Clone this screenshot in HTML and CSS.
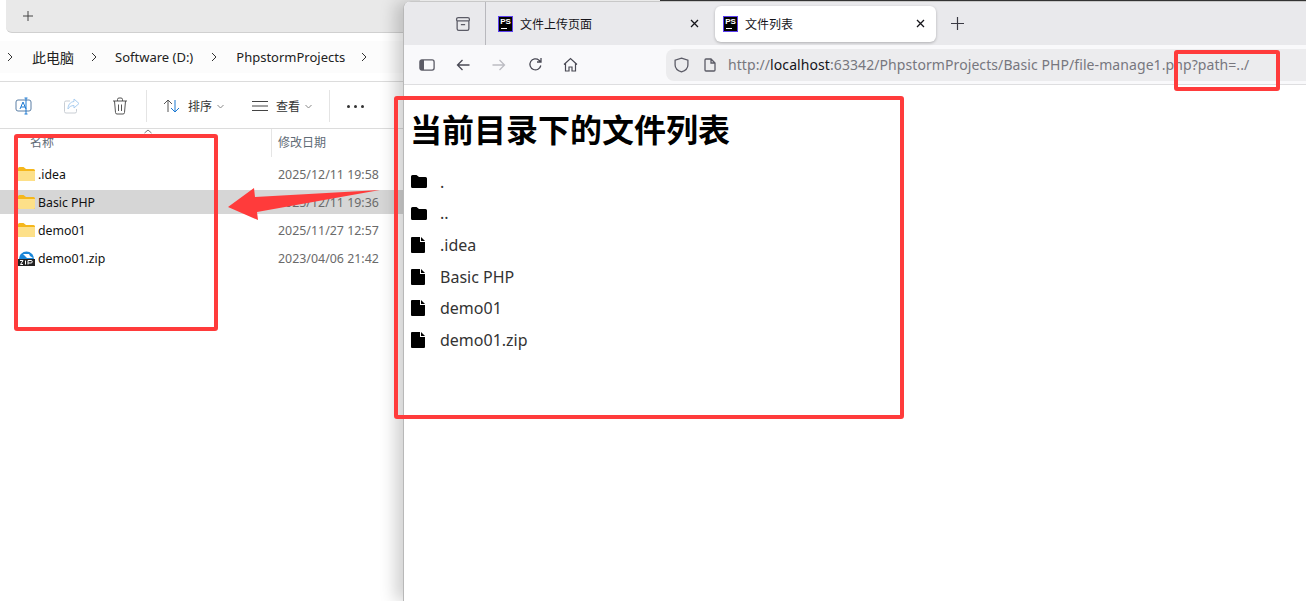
FILE: index.html
```html
<!DOCTYPE html>
<html lang="zh-CN">
<head>
<meta charset="utf-8">
<title>文件列表</title>
<link rel="stylesheet" href="styles.css">
</head>
<body>
<div class="desktop">
  <section class="explorer">
    <div class="ex-tabs">
      <div class="ex-tab-left"></div>
      <svg class="ex-plus" width="12" height="12" viewBox="0 0 12 12"><path d="M6 1v10M1 6h10" stroke="#444" stroke-width="1" fill="none"/></svg>
    </div>
    <div class="ex-address">
      <svg class="crumb-sep first" width="6" height="10" viewBox="0 0 6 10"><path d="M1 1l4 4-4 4" stroke="#333" fill="none"/></svg>
      <span class="crumb zh">此电脑</span>
      <svg class="crumb-sep" width="6" height="10" viewBox="0 0 6 10"><path d="M1 1l4 4-4 4" stroke="#333" fill="none"/></svg>
      <span class="crumb">Software (D:)</span>
      <svg class="crumb-sep wide" width="6" height="10" viewBox="0 0 6 10"><path d="M1 1l4 4-4 4" stroke="#333" fill="none"/></svg>
      <span class="crumb">PhpstormProjects</span>
      <svg class="crumb-sep last" width="6" height="10" viewBox="0 0 6 10"><path d="M1 1l4 4-4 4" stroke="#333" fill="none"/></svg>
    </div>
    <div class="ex-toolbar">
      <svg class="tb-icon rename" width="18" height="18" viewBox="0 0 18 18"><rect x="1" y="3" width="15" height="11" rx="2" fill="none" stroke="#5a7fa6"/><path d="M5 12l3-7 3 7M6 10h4" stroke="#1a78d2" fill="none"/><path d="M11 1v16M9.500 1h3M9.500 17h3" stroke="#1a78d2" fill="none"/></svg>
      <svg class="tb-icon share" width="18" height="18" viewBox="0 0 18 18"><path d="M7 4H3a1.500 1.500 0 0 0-1.500 1.500v9A1.500 1.500 0 0 0 3 16h9a1.500 1.500 0 0 0 1.500-1.500V12" fill="none" stroke="#c9ced4"/><path d="M11 2l5 4.500L11 11V8.500C8 8.500 6 10 5 12c0-4 2-7 6-7.500z" fill="none" stroke="#a9cdf0"/></svg>
      <svg class="tb-icon trash" width="16" height="18" viewBox="0 0 16 18"><path d="M1 4h14M5.500 4V2.500A1.500 1.500 0 0 1 7 1h2a1.500 1.500 0 0 1 1.500 1.500V4M2.500 4l1 11.500A1.500 1.500 0 0 0 5 17h6a1.500 1.500 0 0 0 1.500-1.500l1-11.500M6.500 7.500v6.500M9.500 7.500v6.500" fill="none" stroke="#555"/></svg>
      <span class="tb-sep"></span>
      <div class="tb-btn sort">
        <svg width="18" height="14" viewBox="0 0 18 14"><path d="M5 13V1M1 5l4-4 4 4" stroke="#555" fill="none"/><path d="M12 1v12M8 9l4 4 4-4" stroke="#1a78d2" fill="none"/></svg>
        <span>排序</span>
        <svg class="caret" width="7" height="5" viewBox="0 0 7 5"><path d="M.5 1l3 3 3-3" stroke="#888" fill="none"/></svg>
      </div>
      <div class="tb-btn view">
        <svg width="16" height="12" viewBox="0 0 16 12"><path d="M0 1.500h16M0 6h16M0 10.500h16" stroke="#444" fill="none"/></svg>
        <span>查看</span>
        <svg class="caret" width="7" height="5" viewBox="0 0 7 5"><path d="M.5 1l3 3 3-3" stroke="#888" fill="none"/></svg>
      </div>
      <span class="tb-sep"></span>
      <div class="tb-more"><i></i><i></i><i></i></div>
    </div>
    <div class="ex-head">
      <span class="col-name">名称</span>
      <span class="col-date">修改日期</span>
      <svg class="sort-mark" width="8" height="5" viewBox="0 0 8 5"><path d="M.5 4L4 1l3.500 3" stroke="#777" fill="none"/></svg>
    </div>
    <ul class="ex-list">
      <li class="ex-row"><svg class="folder" width="17" height="14" viewBox="0 0 17 14"><path d="M0 1.500A1.500 1.500 0 0 1 1.500 0h4L8 2h7.500A1.500 1.500 0 0 1 17 3.500V12.500A1.500 1.500 0 0 1 15.500 14h-14A1.500 1.500 0 0 1 0 12.500z" fill="#f5b71c"/><path d="M0 4h17v8.500a1.500 1.500 0 0 1-1.500 1.500h-14A1.500 1.500 0 0 1 0 12.500z" fill="#fde089"/></svg><span class="ex-name">.idea</span><span class="ex-date">2025/12/11 19:58</span></li>
      <li class="ex-row selected"><svg class="folder" width="17" height="14" viewBox="0 0 17 14"><path d="M0 1.500A1.500 1.500 0 0 1 1.500 0h4L8 2h7.500A1.500 1.500 0 0 1 17 3.500V12.500A1.500 1.500 0 0 1 15.500 14h-14A1.500 1.500 0 0 1 0 12.500z" fill="#f5b71c"/><path d="M0 4h17v8.500a1.500 1.500 0 0 1-1.500 1.500h-14A1.500 1.500 0 0 1 0 12.500z" fill="#fde089"/></svg><span class="ex-name">Basic PHP</span><span class="ex-date">2025/12/11 19:36</span></li>
      <li class="ex-row"><svg class="folder" width="17" height="14" viewBox="0 0 17 14"><path d="M0 1.500A1.500 1.500 0 0 1 1.500 0h4L8 2h7.500A1.500 1.500 0 0 1 17 3.500V12.500A1.500 1.500 0 0 1 15.500 14h-14A1.500 1.500 0 0 1 0 12.500z" fill="#f5b71c"/><path d="M0 4h17v8.500a1.500 1.500 0 0 1-1.500 1.500h-14A1.500 1.500 0 0 1 0 12.500z" fill="#fde089"/></svg><span class="ex-name">demo01</span><span class="ex-date">2025/11/27 12:57</span></li>
      <li class="ex-row"><svg class="folder" width="17" height="16" viewBox="0 0 17 16"><path d="M1 9a7.500 7.500 0 0 1 15 0z" fill="#1a86d8"/><path d="M5 4h6l1 2 3 2H9L7 6z" fill="#fff"/><rect y="9" width="17" height="7" fill="#222"/><path d="M2 10.500h3L2.500 14.500H5M7.500 10.500v4M10 14.500v-4h3a1 1 0 0 1 0 2.500h-3" stroke="#fff" fill="none"/></svg><span class="ex-name">demo01.zip</span><span class="ex-date">2023/04/06 21:42</span></li>
    </ul>
  </section>

  <section class="browser">
    <div class="br-tabs">
      <div class="br-side">
        <svg width="16" height="16" viewBox="0 0 15 15"><path d="M3 1.500h9A1.500 1.500 0 0 1 13.500 3v1.500M1.500 4.500V3A1.500 1.500 0 0 1 3 1.500M1.500 4.500h12M2 4.500V12A1.500 1.500 0 0 0 3.500 13.500h8A1.500 1.500 0 0 0 13 12V4.500M5.500 8h4" stroke="#5b5b66" stroke-width="1.200" fill="none"/></svg>
      </div>
      <div class="br-tab">
        <span class="ps-logo">PS</span><span class="br-title">文件上传页面</span>
        <svg class="br-close" width="9" height="9" viewBox="0 0 9 9"><path d="M1 1l7 7M8 1L1 8" stroke="#15141a" stroke-width="1.300"/></svg>
      </div>
      <div class="br-tab active">
        <span class="ps-logo">PS</span><span class="br-title">文件列表</span>
        <svg class="br-close" width="9" height="9" viewBox="0 0 9 9"><path d="M1 1l7 7M8 1L1 8" stroke="#15141a" stroke-width="1.300"/></svg>
      </div>
      <svg class="br-new" width="13" height="13" viewBox="0 0 13 13"><path d="M6.500 0v13M0 6.500h13" stroke="#3a3a44" stroke-width="1.200"/></svg>
    </div>
    <div class="br-bar">
      <svg class="nav first" width="16" height="14" viewBox="0 0 16 14"><rect x=".9" y="1.900" width="14.200" height="10.200" rx="2" fill="none" stroke="#5b5b66" stroke-width="1.300"/><rect x="1" y="2" width="4" height="10" fill="#5b5b66"/></svg>
      <svg class="nav" width="14" height="14" viewBox="0 0 14 14"><path d="M13.500 7H1.500M6.500 2l-5 5 5 5" stroke="#4a4a55" stroke-width="1.300" fill="none"/></svg>
      <svg class="nav fwd" width="14" height="14" viewBox="0 0 14 14"><path d="M.5 7h12M7.500 2l5 5-5 5" stroke="#bcbcc2" stroke-width="1.300" fill="none"/></svg>
      <svg class="nav reload" width="15" height="15" viewBox="0 0 15 15"><path d="M12.800 8.500A5.500 5.500 0 1 1 11 3.200L13 5M13 1v4H9" stroke="#4a4a55" stroke-width="1.300" fill="none"/></svg>
      <svg class="nav home" width="15" height="15" viewBox="0 0 15 15"><path d="M1 7.500L7.500 1.500l6.500 6M2.500 6.500V14h3.500V10h3v4h3.500V6.500" stroke="#4a4a55" stroke-width="1.200" fill="none"/></svg>
      <div class="urlbar">
        <svg class="url-shield" width="15" height="16" viewBox="0 0 14 15"><path d="M7 1l6 2v4.500c0 3.500-3 5.500-6 6.500-3-1-6-3-6-6.500V3z" fill="none" stroke="#5b5b66" stroke-width="1.200"/></svg>
        <svg class="url-page" width="12" height="14" viewBox="0 0 12 14"><path d="M2 1h5l4 4v7a1 1 0 0 1-1 1H2a1 1 0 0 1-1-1V2a1 1 0 0 1 1-1zM7 1v4h4" fill="none" stroke="#5b5b66" stroke-width="1.300"/></svg>
        <span class="url"><span class="url-dim">http://</span><span class="url-host">localhost</span><span class="url-dim">:63342/PhpstormProjects/Basic PHP/file-manage1.php?path=../</span></span>
      </div>
    </div>
    <main class="page">
      <h1 class="page-title">当前目录下的文件列表</h1>
      <ul class="file-list">
        <li class="file-row"><svg class="fi" width="16" height="13" viewBox="0 0 16 13"><path d="M0 1.500A1.500 1.500 0 0 1 1.500 0h4L8 2h6.500A1.500 1.500 0 0 1 16 3.500v8a1.500 1.500 0 0 1-1.500 1.500h-13A1.500 1.500 0 0 1 0 11.500z" fill="#000"/></svg><span>.</span></li>
        <li class="file-row"><svg class="fi" width="16" height="13" viewBox="0 0 16 13"><path d="M0 1.500A1.500 1.500 0 0 1 1.500 0h4L8 2h6.500A1.500 1.500 0 0 1 16 3.500v8a1.500 1.500 0 0 1-1.500 1.500h-13A1.500 1.500 0 0 1 0 11.500z" fill="#000"/></svg><span>..</span></li>
        <li class="file-row"><svg class="fi" width="16" height="16" viewBox="0 0 16 16"><path d="M0 1a1 1 0 0 1 1-1h8v5h5v10a1 1 0 0 1-1 1H1a1 1 0 0 1-1-1zM10 0l4 4h-4z" fill="#000"/></svg><span>.idea</span></li>
        <li class="file-row"><svg class="fi" width="16" height="16" viewBox="0 0 16 16"><path d="M0 1a1 1 0 0 1 1-1h8v5h5v10a1 1 0 0 1-1 1H1a1 1 0 0 1-1-1zM10 0l4 4h-4z" fill="#000"/></svg><span>Basic PHP</span></li>
        <li class="file-row"><svg class="fi" width="16" height="16" viewBox="0 0 16 16"><path d="M0 1a1 1 0 0 1 1-1h8v5h5v10a1 1 0 0 1-1 1H1a1 1 0 0 1-1-1zM10 0l4 4h-4z" fill="#000"/></svg><span>demo01</span></li>
        <li class="file-row"><svg class="fi" width="16" height="16" viewBox="0 0 16 16"><path d="M0 1a1 1 0 0 1 1-1h8v5h5v10a1 1 0 0 1-1 1H1a1 1 0 0 1-1-1zM10 0l4 4h-4z" fill="#000"/></svg><span>demo01.zip</span></li>
      </ul>
    </main>
  </section>

  <div class="top-line"></div>
  <div class="mark mark-left"></div>
  <div class="mark mark-right"></div>
  <div class="mark mark-url"></div>
  <svg class="arrow" width="160" height="40" viewBox="0 0 160 40"><polygon points="0,27 26,8 27,17 152,10 29,32 30,40" fill="#ff3b3b"/></svg>
</div>
</body>
</html>
```

FILE: styles.css
```css
* { box-sizing: border-box; }
html, body { margin: 0; padding: 0; background: #fff; }
ul { list-style: none; margin: 0; padding: 0; }
.desktop {
  position: relative;
  width: 1306px;
  height: 601px;
  overflow: hidden;
  font-family: "Noto Sans", "Noto Sans CJK SC", sans-serif;
}

/* Explorer window */
.explorer {
  position: absolute;
  left: 0;
  top: 0;
  width: 420px;
  height: 601px;
  background: #fff;
  font-size: 13px;
  color: #1a1a1a;
}
.ex-tabs {
  display: flex;
  align-items: center;
  height: 33px;
  background: #e9e9e9;
  border-bottom: 1px solid #d0d0d0;
  border-bottom-left-radius: 6px;
  margin-left: 6px;
}
.ex-plus { margin-left: 16px; }
.ex-address {
  display: flex;
  align-items: center;
  height: 32px;
  margin-top: 8px;
  background: #fcfcfc;
  font-size: 13px;
  color: #222;
}
.crumb.zh { font-size: 14px; }
.crumb-sep { margin: 0 18px 0 17px; flex: none; }
.crumb-sep.first { margin: 0 19px 0 7px; }
.crumb-sep.wide { margin: 0 19px 0 18px; }
.crumb-sep.last { margin-left: 16px; }
.ex-toolbar {
  display: flex;
  align-items: center;
  height: 48px;
  margin-top: 8px;
  padding-top: 2px;
  background: #fff;
  border-top: 1px solid #dcdcdc;
  border-bottom: 1px solid #dcdcdc;
  font-size: 12px;
  color: #333;
}
.tb-icon { flex: none; }
.rename { margin-left: 15px; }
.share { margin-left: 30px; }
.trash { margin-left: 31px; }
.tb-sep { width: 1px; height: 32px; background: #e4e4e4; flex: none; }
.trash + .tb-sep { margin-left: 18px; }
.tb-btn { display: flex; align-items: center; flex: none; }
.tb-btn span { margin: 0 5px 0 7px; }
.sort { margin-left: 16px; }
.view { margin-left: 28px; }
.view span { margin-left: 8px; }
.view + .tb-sep { margin-left: 17px; }
.tb-more { display: flex; gap: 4px; margin-left: 17px; }
.tb-more i { width: 3px; height: 3px; border-radius: 50%; background: #333; }
.ex-head {
  position: relative;
  display: flex;
  height: 28px;
  font-size: 12px;
  color: #5f6b76;
}
.col-name { width: 271px; padding: 4px 0 0 30px; }
.col-date { height: 28px; padding: 4px 0 0 6px; border-left: 1px solid #e5e5e5; }
.sort-mark { position: absolute; left: 144px; top: 0; }
.ex-list { padding-top: 3px; }
.ex-row {
  display: flex;
  align-items: center;
  height: 28px;
  padding-left: 18px;
}
.folder { flex: none; }
.ex-name { width: 240px; margin-left: 3px; font-size: 12.3px; color: #111; }
.ex-date { font-size: 12.4px; color: #6a6a6a; }
.selected { background: linear-gradient(#d6d6d6, #d6d6d6) 0 2px / 100% 24px no-repeat; }

/* Browser window */
.browser {
  position: absolute;
  left: 403px;
  top: 1px;
  width: 903px;
  height: 600px;
  background: #fff;
  border-left: 1px solid #b8b8b8;
  border-top-left-radius: 8px;
  box-shadow: -8px 0 16px rgba(0, 0, 0, .18);
  overflow: hidden;
}
.br-tabs {
  display: flex;
  align-items: center;
  height: 44px;
  background: #e9e9ec;
  border-top: 1px solid #c8c8c8;
}
.br-side {
  display: flex;
  align-items: center;
  justify-content: center;
  width: 82px;
  height: 43px;
  padding-left: 37px;
  border-right: 1px solid #b8b8bd;
  flex: none;
}
.br-tab {
  display: flex;
  align-items: center;
  width: 221px;
  height: 36px;
  padding: 0 8px 0 12px;
  font-size: 12px;
  color: #15141a;
  flex: none;
}
.br-tab + .br-tab { margin-left: 8px; }
.br-tab.active {
  padding: 0 11px 0 8px;
  background: #fff;
  border-radius: 6px;
  box-shadow: 0 1px 3px rgba(0, 0, 0, .25);
}
.ps-logo {
  position: relative;
  display: block;
  width: 15px;
  height: 16px;
  background: #000;
  border: 1px solid #5b3ff0;
  color: #fff;
  font: bold 8px/9px "Liberation Sans", sans-serif;
  text-align: center;
  flex: none;
}
.ps-logo::after {
  content: "";
  position: absolute;
  left: 2px;
  bottom: 2px;
  width: 6px;
  height: 1px;
  background: #fff;
}
.br-title { flex: 1; margin-left: 7px; font-family: "Noto Sans CJK SC", sans-serif; }
.br-close { flex: none; }
.br-new { margin-left: 15px; }
.br-bar {
  display: flex;
  align-items: center;
  height: 40px;
  background: #f9f9fb;
  border-bottom: 1px solid #dedee0;
}
.nav { flex: none; margin-left: 21px; }
.nav.first { margin-left: 15px; }
.nav.fwd { margin-left: 22px; }
.nav.reload { margin-left: 22px; }
.nav.home { margin-left: 20px; }
.urlbar {
  display: flex;
  align-items: center;
  width: 640px;
  height: 32px;
  margin-left: 88px;
  background: #ececee;
  border-radius: 8px 0 0 8px;
  padding-left: 8px;
  flex: none;
}
.url-page { margin-left: 15px; flex: none; }
.url-shield { flex: none; }
.url { margin-left: 12px; font-size: 14px; white-space: nowrap; letter-spacing: .08px; }
.url-dim { color: #77777e; }
.url-host { color: #15141a; }
.page { padding: 0 0 0 7px; }
.page-title {
  margin: 0 0 0 -1px;
  padding-top: 20px;
  font-family: "Noto Sans CJK SC", sans-serif;
  font-size: 32px;
  font-weight: 700;
  line-height: 46px;
  color: #000;
}
.file-list { margin-top: 15px; }
.file-row {
  display: flex;
  align-items: center;
  height: 31.6px;
  font-size: 16px;
  color: #333;
}
.fi { flex: none; width: 16px; margin-right: 13px; }

/* Annotations */
.top-line {
  position: absolute;
  left: 660px;
  top: 0;
  width: 646px;
  height: 1px;
  background: #333;
}
.mark {
  position: absolute;
  border: 4px solid #ff3b3b;
  border-radius: 3px;
}
.mark-left { left: 14px; top: 134px; width: 204px; height: 197px; }
.mark-right { left: 394px; top: 96px; width: 510px; height: 323px; }
.mark-url { left: 1174px; top: 50px; width: 106px; height: 41px; }
.arrow { position: absolute; left: 228px; top: 180px; }
```
